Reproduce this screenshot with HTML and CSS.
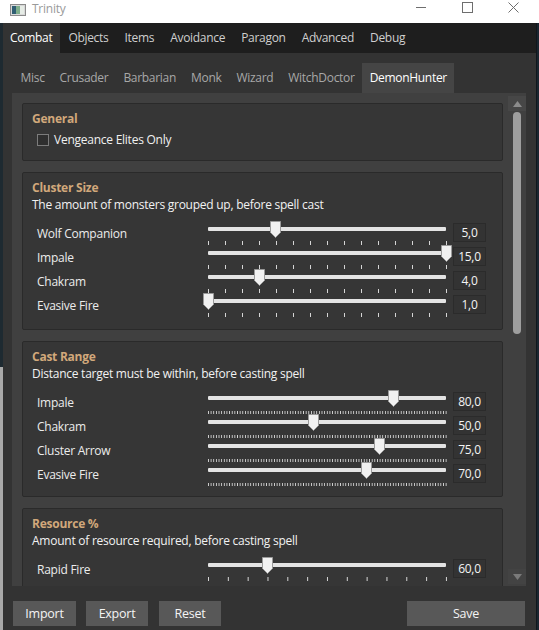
FILE: index.html
```html
<!DOCTYPE html>
<html lang="en">
<head>
<meta charset="utf-8">
<title>Trinity</title>
<link rel="stylesheet" href="styles.css">
</head>
<body>
<header class="titlebar">
  <svg class="app-icon" width="16" height="12" viewBox="0 0 16 12">
    <rect x="0.5" y="0.5" width="15" height="11" fill="#d8d8d8" stroke="#8a8a8a"/>
    <rect x="2" y="2" width="4" height="8" fill="#2f5e73"/>
    <rect x="6" y="2" width="4" height="8" fill="#7fae8c"/>
    <rect x="10" y="2" width="4" height="8" fill="#e6ece6"/>
  </svg>
  <span class="title">Trinity</span>
  <div class="winctl">
    <span class="ctl"><svg width="11" height="11" viewBox="0 0 11 11"><path d="M0 5.5H10" stroke="#6e6e6e" stroke-width="1"/></svg></span>
    <span class="ctl"><svg width="11" height="11" viewBox="0 0 11 11"><rect x="0.5" y="0.5" width="10" height="10" fill="none" stroke="#6e6e6e"/></svg></span>
    <span class="ctl"><svg width="11" height="11" viewBox="0 0 11 11"><path d="M0.5 0.5L10.5 10.5M10.5 0.5L0.5 10.5" stroke="#6e6e6e" stroke-width="1"/></svg></span>
  </div>
</header>
<div class="shell">
  <div class="edge-left"></div>
  <div class="window">
    <nav class="main-tabs">
      <span class="mtab active">Combat</span>
      <span class="mtab">Objects</span>
      <span class="mtab">Items</span>
      <span class="mtab">Avoidance</span>
      <span class="mtab">Paragon</span>
      <span class="mtab">Advanced</span>
      <span class="mtab">Debug</span>
    </nav>
    <nav class="sub-tabs">
      <span class="stab">Misc</span>
      <span class="stab">Crusader</span>
      <span class="stab">Barbarian</span>
      <span class="stab">Monk</span>
      <span class="stab">Wizard</span>
      <span class="stab">WitchDoctor</span>
      <span class="stab active">DemonHunter</span>
    </nav>
    <div class="panel">
      <div class="scroll-view">
        <section class="group">
          <div class="group-title">General</div>
          <label class="check-row"><span class="checkbox"></span><span>Vengeance Elites Only</span></label>
        </section>

        <section class="group">
          <div class="group-title">Cluster Size</div>
          <div class="group-desc">The amount of monsters grouped up, before spell cast</div>
          <div class="rows">
            <div class="row"><span class="row-label">Wolf Companion</span><div class="slider"><div class="track"></div><div class="ticks t14"></div><svg class="thumb" style="--p:0.2857" width="11" height="17" viewBox="0 0 11 17"><path d="M0.5 0.5H10.5V11.5L5.5 16.5L0.5 11.5Z"/></svg></div><span class="value">5,0</span></div>
            <div class="row"><span class="row-label">Impale</span><div class="slider"><div class="track"></div><div class="ticks t14"></div><svg class="thumb" style="--p:1" width="11" height="17" viewBox="0 0 11 17"><path d="M0.5 0.5H10.5V11.5L5.5 16.5L0.5 11.5Z"/></svg></div><span class="value">15,0</span></div>
            <div class="row"><span class="row-label">Chakram</span><div class="slider"><div class="track"></div><div class="ticks t14"></div><svg class="thumb" style="--p:0.2143" width="11" height="17" viewBox="0 0 11 17"><path d="M0.5 0.5H10.5V11.5L5.5 16.5L0.5 11.5Z"/></svg></div><span class="value">4,0</span></div>
            <div class="row"><span class="row-label">Evasive Fire</span><div class="slider"><div class="track"></div><div class="ticks t14"></div><svg class="thumb" style="--p:0" width="11" height="17" viewBox="0 0 11 17"><path d="M0.5 0.5H10.5V11.5L5.5 16.5L0.5 11.5Z"/></svg></div><span class="value">1,0</span></div>
          </div>
        </section>

        <section class="group group-tight">
          <div class="group-title">Cast Range</div>
          <div class="group-desc">Distance target must be within, before casting spell</div>
          <div class="rows">
            <div class="row"><span class="row-label">Impale</span><div class="slider"><div class="track"></div><div class="ticks t90"></div><svg class="thumb" style="--p:0.7778" width="11" height="17" viewBox="0 0 11 17"><path d="M0.5 0.5H10.5V11.5L5.5 16.5L0.5 11.5Z"/></svg></div><span class="value">80,0</span></div>
            <div class="row"><span class="row-label">Chakram</span><div class="slider"><div class="track"></div><div class="ticks t90"></div><svg class="thumb" style="--p:0.4444" width="11" height="17" viewBox="0 0 11 17"><path d="M0.5 0.5H10.5V11.5L5.5 16.5L0.5 11.5Z"/></svg></div><span class="value">50,0</span></div>
            <div class="row"><span class="row-label">Cluster Arrow</span><div class="slider"><div class="track"></div><div class="ticks t90"></div><svg class="thumb" style="--p:0.7222" width="11" height="17" viewBox="0 0 11 17"><path d="M0.5 0.5H10.5V11.5L5.5 16.5L0.5 11.5Z"/></svg></div><span class="value">75,0</span></div>
            <div class="row"><span class="row-label">Evasive Fire</span><div class="slider"><div class="track"></div><div class="ticks t90"></div><svg class="thumb" style="--p:0.6667" width="11" height="17" viewBox="0 0 11 17"><path d="M0.5 0.5H10.5V11.5L5.5 16.5L0.5 11.5Z"/></svg></div><span class="value">70,0</span></div>
          </div>
        </section>

        <section class="group">
          <div class="group-title">Resource %</div>
          <div class="group-desc">Amount of resource required, before casting spell</div>
          <div class="rows">
            <div class="row"><span class="row-label">Rapid Fire</span><div class="slider"><div class="track"></div><div class="ticks t12"></div><svg class="thumb" style="--p:0.25" width="11" height="17" viewBox="0 0 11 17"><path d="M0.5 0.5H10.5V11.5L5.5 16.5L0.5 11.5Z"/></svg></div><span class="value">60,0</span></div>
          </div>
        </section>
      </div>
      <div class="scrollbar">
        <span class="sb-btn"><svg width="9" height="6" viewBox="0 0 9 6"><path d="M4.5 0L9 6H0Z" fill="#8c8c8c"/></svg></span>
        <span class="sb-thumb"></span>
        <span class="sb-btn sb-down"><svg width="9" height="6" viewBox="0 0 9 6"><path d="M0 0H9L4.5 6Z" fill="#7a7a7a"/></svg></span>
      </div>
    </div>
    <footer class="footer">
      <button class="btn btn-import">Import</button>
      <button class="btn btn-export">Export</button>
      <button class="btn btn-reset">Reset</button>
      <button class="btn btn-save">Save</button>
    </footer>
  </div>
  <div class="edge-right"></div>
</div>
</body>
</html>
```
FILE: styles.css
```css
* { box-sizing: border-box; }

body {
  margin: 0;
  width: 539px;
  height: 630px;
  overflow: hidden;
  background: #1b2630;
  font-family: "Open Sans", "Noto Sans", sans-serif;
  font-size: 12px;
  letter-spacing: -0.25px;
  color: #f0f0f0;
}

/* title bar */
.titlebar {
  height: 23px;
  background: #ffffff;
  display: flex;
  align-items: center;
  position: relative;
}
.app-icon { margin-left: 10px; margin-top: -3px; }
.title {
  margin-left: 6px;
  margin-top: -6px;
  color: #9a9a9a;
  font-size: 12px;
}
.winctl {
  margin-left: auto;
  margin-right: 3px;
  display: flex;
  align-self: flex-start;
}
.ctl {
  width: 46px;
  height: 14px;
  display: flex;
  justify-content: center;
  align-items: flex-start;
  padding-top: 2px;
}

/* shell */
.shell {
  display: flex;
  height: 607px;
}
.edge-left {
  width: 3px;
  background: linear-gradient(to bottom, #1e2a31 0, #1e2a31 344px, #a9a9a9 344px, #a9a9a9 100%);
}
.edge-right {
  flex: 1;
  background: #1b2630;
  border-left: 1px solid #10171c;
}
.window {
  width: 533px;
  background: #333333;
  display: flex;
  flex-direction: column;
}

/* main tabs */
.main-tabs {
  height: 30px;
  background: #1e1e1e;
  display: flex;
}
.mtab {
  padding: 0 8px;
  line-height: 30px;
  font-size: 12px;
  letter-spacing: -0.3px;
  color: #cfcfcf;
}
.mtab:first-child { padding-left: 7px; }
.mtab.active {
  background: #333333;
  color: #ffffff;
}

/* sub tabs */
.sub-tabs {
  height: 40px;
  padding: 10px 0 0 10px;
  display: flex;
}
.stab {
  padding: 0 7.5px;
  line-height: 30px;
  font-size: 12px;
  letter-spacing: -0.3px;
  color: #a8a8a8;
}
.stab.active {
  background: #454545;
  color: #ffffff;
}

/* panel */
.panel {
  height: 493px;
  margin: 0 10px 0 9px;
  background: #404040;
  display: flex;
}
.scroll-view {
  flex: 1;
  overflow: hidden;
  padding: 10px 5px 0 10px;
}
.group {
  background: #363636;
  border: 1px solid #2a2a2a;
  border-radius: 2px;
  padding: 6px 9px 12px 9px;
  margin-bottom: 11px;
}
.group.group-tight { padding-bottom: 10px; }
.group-title {
  color: #d1a87b;
  font-weight: bold;
  line-height: 17px;
}
.group-desc {
  line-height: 17px;
  color: #f2f2f2;
}
.check-row {
  display: flex;
  align-items: center;
  margin: 4px 0 0 5px;
  height: 17px;
  gap: 5px;
}
.checkbox {
  width: 12px;
  height: 12px;
  border: 1px solid #7c7c7c;
  background: #2f2f2f;
}

.rows { margin-top: 8px; }
.row {
  height: 24px;
  display: flex;
  margin-left: 5px;
}
.row-label {
  width: 166px;
  line-height: 26px;
  color: #ececec;
}
.slider {
  width: 248px;
  height: 24px;
  position: relative;
}
.track {
  position: absolute;
  left: 5px;
  right: 5px;
  top: 6px;
  height: 4px;
  background: #e4e4e4;
  border-radius: 1px;
}
.ticks {
  position: absolute;
  left: 5px;
  width: 239px;
  top: 20px;
  height: 4px;
  background-image: linear-gradient(to right, #d6d6d6 1px, transparent 1px);
  background-repeat: repeat-x;
}
.ticks.t14 { background-size: 17px 100%; }
.ticks.t90 { background-size: 2.6444px 100%; height: 3px; top: 21px; }
.ticks.t12 { background-size: 19.8333px 100%; }
.thumb {
  position: absolute;
  top: 0;
  left: calc(var(--p) * 238px - 0.5px);
}
.thumb path {
  fill: #f1f1f1;
  stroke: #9a9a9a;
  stroke-width: 1;
}
.value {
  margin-left: 2px;
  margin-top: 2px;
  width: 33px;
  height: 19px;
  background: #333333;
  border: 1px solid #2b2b2b;
  text-align: center;
  line-height: 17px;
  color: #f4f4f4;
}

/* scrollbar */
.scrollbar {
  width: 18px;
  padding: 3px 0 2px 0;
  display: flex;
  flex-direction: column;
  align-items: center;
}
.sb-btn {
  width: 18px;
  height: 15px;
  background: #474747;
  display: flex;
  justify-content: center;
  align-items: center;
}
.sb-thumb {
  width: 8px;
  height: 222px;
  margin-top: 1px;
  background: #9e9e9e;
  border-radius: 4px;
}
.sb-down { margin-top: auto; background: #434343; }

/* footer */
.footer {
  flex: 1;
  display: flex;
  padding: 15px 11px 0 10px;
  gap: 10px;
  align-items: flex-start;
}
.btn {
  height: 25px;
  border: none;
  background: #585858;
  color: #f4f4f4;
  font-family: inherit;
  font-size: 12.5px;
  letter-spacing: -0.25px;
  padding: 0;
}
.btn-import { width: 63px; }
.btn-export { width: 62px; }
.btn-reset { width: 62px; margin-left: 1px; }
.btn-save { width: 118px; margin-left: auto; }
```
